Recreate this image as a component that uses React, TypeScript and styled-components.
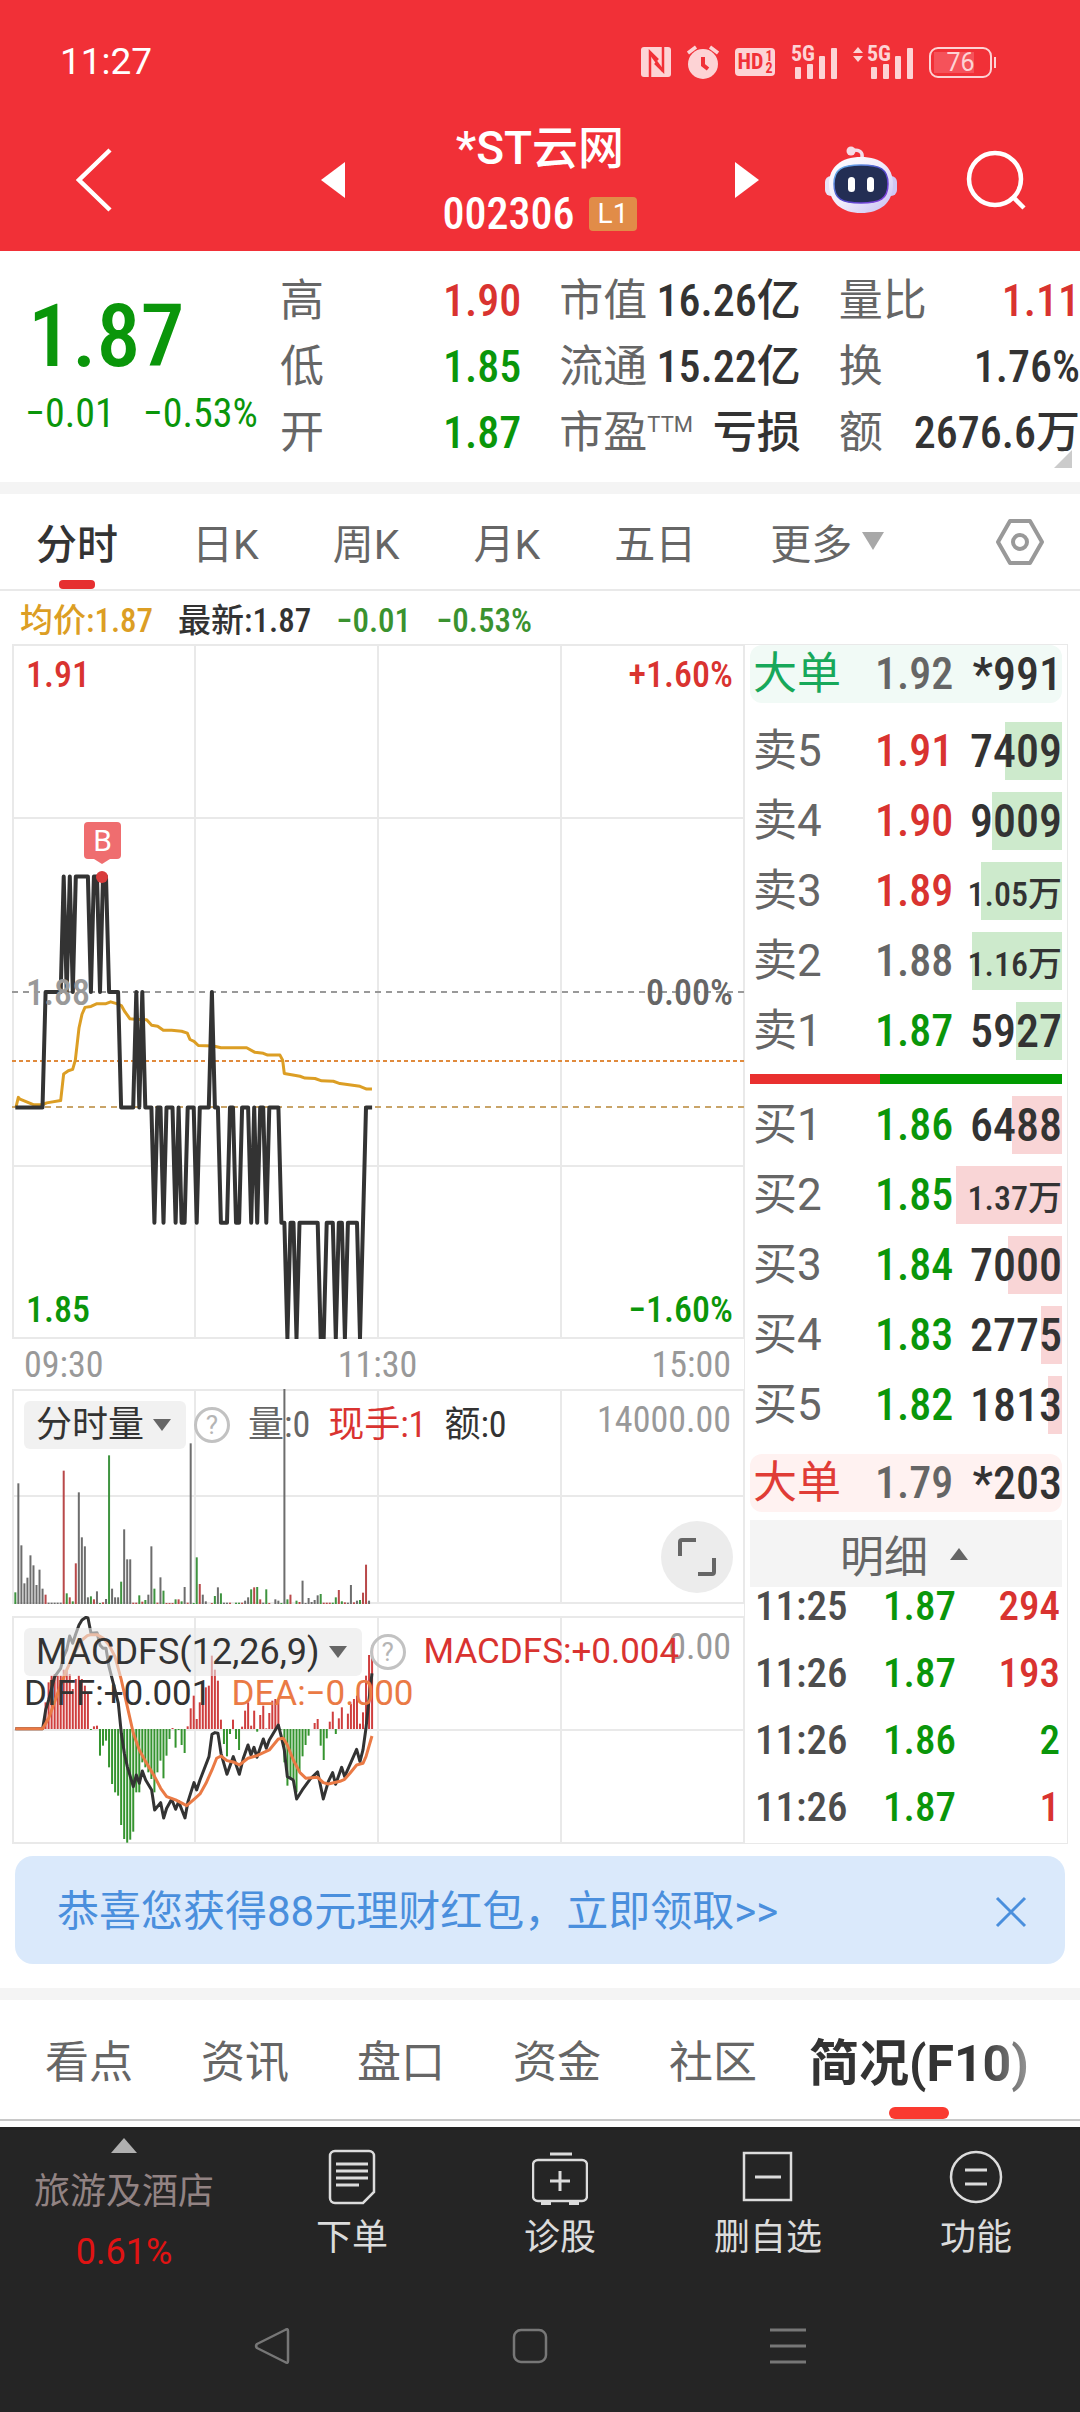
import React from "react";
import styled, { createGlobalStyle } from "styled-components";

const c = {
  brand: "#f13037",
  up: "#d93330",
  down: "#0a960a",
  ink: "#333333",
  mid: "#666666",
  pale: "#999999",
  line: "#e9e9e9",
  band: "#f4f4f4",
  dark: "#252525",
};

const text = `Roboto, "Noto Sans CJK SC", sans-serif`;
const figures = `"Roboto Condensed", Roboto, "Noto Sans CJK SC", sans-serif`;

const Global = createGlobalStyle`
  *, *::before, *::after { box-sizing: border-box; }
  body { margin: 0; background: #fff; font-family: ${text}; color: ${c.ink}; }
  button { margin: 0; padding: 0; border: 0; background: none; font: inherit; color: inherit; cursor: pointer; }
  h1, p, dl, dd, dt, ul { margin: 0; padding: 0; }
  svg { display: block; flex: none; }
`;

const Page = styled.div`
  display: flex;
  flex-direction: column;
  width: 100%;
  background: #fff;
  overflow: hidden;
`;

/* ---------- header ---------- */

const Header = styled.header`
  background: ${c.brand};
  color: #fff;
  padding-bottom: 15px;
`;

const StatusBar = styled.div`
  display: flex;
  align-items: center;
  justify-content: space-between;
  height: 124px;
  padding: 0 84px 0 60px;
  font-size: 37px;
  line-height: 40px;
`;

const StatusIcons = styled.div`
  display: flex;
  align-items: center;
  gap: 16px;
  font-family: ${figures};
`;

const TitleBar = styled.div`
  display: grid;
  grid-template-columns: 1fr 438px 1fr;
  grid-template-rows: 112px;
  align-items: center;
  padding: 0 54px 0 76px;
`;

const IconButton = styled.button`
  display: flex;
  align-items: center;
  justify-content: center;
  justify-self: start;
`;

const Switcher = styled.div`
  display: flex;
  align-items: center;
  justify-content: space-between;
  margin-left: -11px;
  margin-right: 11px;
`;

const StockTitle = styled.div`
  display: flex;
  flex-direction: column;
  align-items: center;
  gap: 4px;
`;

const StockName = styled.h1`
  font-size: 46px;
  line-height: 64px;
  font-weight: 500;
`;

const StockCode = styled.div`
  display: flex;
  align-items: center;
  gap: 14px;
  font-family: ${figures};
  font-size: 44px;
  line-height: 60px;
  font-weight: 500;
`;

const Level = styled.span`
  padding: 0 9px;
  border-radius: 4px;
  background: #e18c48;
  font-size: 28px;
  line-height: 34px;
  font-weight: 400;
  font-family: ${text};
`;

const HeaderTools = styled.div`
  display: flex;
  justify-content: flex-end;
  align-items: center;
  gap: 69px;
`;

/* ---------- quote ---------- */

const Quote = styled.section`
  position: relative;
  display: flex;
  padding: 17px 0 16px;
  font-family: ${figures};
`;

const Latest = styled.div`
  flex: 0 0 280px;
  display: flex;
  flex-direction: column;
  color: ${c.down};
`;

const BigPrice = styled.p`
  padding: 16px 0 2px 28px;
  font-size: 88px;
  line-height: 104px;
  font-weight: 500;
`;

const Deltas = styled.p`
  display: flex;
  gap: 28px;
  padding-left: 25px;
  font-size: 40px;
  line-height: 48px;
`;

const Stats = styled.dl`
  flex: 1;
  display: grid;
  grid-template-columns: repeat(3, 1fr);
  column-gap: 38px;
`;

const Stat = styled.div`
  display: flex;
  justify-content: space-between;
  font-size: 44px;
  line-height: 66px;
  white-space: nowrap;
`;

const StatLabel = styled.dt`
  color: ${c.mid};
`;

const Ttm = styled.sup`
  font-size: 22px;
  line-height: 22px;
  font-family: ${text};
`;

const StatValue = styled.dd<{ $color?: string }>`
  color: ${(p) => p.$color ?? c.ink};
  font-weight: 500;
`;

const Corner = styled.i`
  position: absolute;
  right: 8px;
  bottom: 14px;
  border-left: 18px solid transparent;
  border-bottom: 18px solid #cbcbcb;
`;

const Band = styled.div`
  height: 12px;
  background: ${c.band};
`;

/* ---------- period tabs ---------- */

const PeriodTabs = styled.nav`
  display: flex;
  gap: 74px;
  height: 97px;
  padding: 0 35px 0 36px;
  border-bottom: 2px solid ${c.line};
  font-size: 41px;
`;

const PeriodTab = styled.button<{ $active?: boolean }>`
  position: relative;
  display: flex;
  align-items: center;
  gap: 10px;
  padding-bottom: 2px;
  color: ${(p) => (p.$active ? c.ink : c.mid)};
  font-weight: ${(p) => (p.$active ? 500 : 400)};
  &::after {
    content: "";
    display: ${(p) => (p.$active ? "block" : "none")};
    position: absolute;
    left: 50%;
    bottom: 0;
    width: 36px;
    height: 9px;
    margin-left: -18px;
    border-radius: 4px;
    background: #e62f30;
  }
`;

const Settings = styled(IconButton)`
  margin-left: auto;
`;

const Summary = styled.div`
  display: flex;
  align-items: center;
  gap: 25px;
  height: 53px;
  padding: 6px 0 0 20px;
  font-family: ${figures};
  font-size: 33px;
  line-height: 44px;
  font-weight: 500;
`;

const Tint = styled.span<{ $color: string }>`
  color: ${(p) => p.$color};
`;

/* ---------- charts ---------- */

const Board = styled.div`
  display: flex;
  padding: 0 12px;
`;

const Charts = styled.div`
  flex: 1;
  min-width: 0;
  display: flex;
  flex-direction: column;
  font-family: ${figures};
  font-size: 36px;
  line-height: 48px;
`;

const Plot = styled.div<{ $h: number; $gap?: number }>`
  position: relative;
  height: ${(p) => p.$h}px;
  margin-top: ${(p) => p.$gap ?? 0}px;
  > svg {
    width: 100%;
    height: 100%;
  }
`;

const Scale = styled.div`
  position: absolute;
  inset: 7px 11px 5px 14px;
  display: flex;
  flex-direction: column;
  justify-content: space-between;
  font-weight: 500;
`;

const ScaleRow = styled.div<{ $left: string; $right?: string }>`
  display: flex;
  justify-content: space-between;
  color: ${(p) => p.$left};
  span + span {
    color: ${(p) => p.$right ?? p.$left};
  }
`;

const BuyMark = styled.span`
  position: absolute;
  left: 72px;
  top: 178px;
  width: 37px;
  border-radius: 4px;
  background: #ef6d6f;
  color: #fff;
  font-family: ${text};
  font-size: 30px;
  line-height: 37px;
  text-align: center;
  &::after {
    content: "";
    position: absolute;
    left: 10px;
    top: 37px;
    border: 8px solid transparent;
    border-bottom: 0;
    border-top: 5px solid #ef6d6f;
  }
`;

const TimeAxis = styled.div`
  display: flex;
  justify-content: space-between;
  padding: 2px 13px 0 12px;
  color: ${c.pale};
`;

const Readout = styled.div`
  position: absolute;
  left: 12px;
  top: 12px;
  display: flex;
  align-items: center;
  gap: 18px;
  white-space: nowrap;
`;

const MacdReadout = styled(Readout)`
  font-family: ${text};
  font-size: 35px;
`;

const Pill = styled.button`
  display: flex;
  align-items: center;
  gap: 9px;
  height: 48px;
  padding: 0 15px 0 12px;
  border-radius: 6px;
  background: rgba(232, 232, 232, 0.6);
  color: ${c.ink};
  font-size: 36px;
`;

const Help = styled.button`
  width: 36px;
  height: 36px;
  margin-left: -10px;
  border: 3px solid #c2c2c2;
  border-radius: 50%;
  color: #b5b5b5;
  font-family: ${text};
  font-size: 26px;
  line-height: 30px;
`;

const SecondLine = styled.div`
  position: absolute;
  left: 12px;
  top: 54px;
  display: flex;
  gap: 20px;
  font-family: ${text};
  font-size: 35px;
`;

const TopRight = styled.span`
  position: absolute;
  right: 13px;
  top: 7px;
  color: ${c.pale};
`;

const Expand = styled.button`
  position: absolute;
  right: 11px;
  bottom: 11px;
  display: flex;
  align-items: center;
  justify-content: center;
  width: 72px;
  height: 72px;
  border-radius: 50%;
  background: #ececec;
`;

/* ---------- order book ---------- */

const Book = styled.aside`
  flex: 0 0 324px;
  padding: 0 5px;
  border: 1px solid ${c.line};
  font-family: ${figures};
  font-size: 44px;
`;

const Table = styled.table<{ $gap?: number }>`
  width: 100%;
  margin-top: ${(p) => p.$gap ?? 0}px;
  border-collapse: collapse;
  table-layout: fixed;
`;

const LabelCell = styled.th<{ $color?: string; $h?: number }>`
  width: 125px;
  padding: 0 0 0 3px;
  color: ${(p) => p.$color ?? c.mid};
  font-family: ${text};
  font-weight: 400;
  line-height: ${(p) => p.$h ?? 70}px;
  text-align: left;
`;

const PriceCell = styled.td<{ $color: string }>`
  width: 81px;
  padding: 0;
  color: ${(p) => p.$color};
  font-weight: 500;
`;

const VolumeCell = styled.td`
  position: relative;
  padding: 0;
  text-align: right;
  font-weight: 500;
  white-space: nowrap;
`;

const VolumeBar = styled.i<{ $color: string }>`
  position: absolute;
  right: 0;
  top: 6px;
  height: 58px;
  background: ${(p) => p.$color};
`;

const VolumeText = styled.span<{ $small: boolean }>`
  position: relative;
  font-size: ${(p) => (p.$small ? 34 : 46)}px;
`;

const BigOrder = styled.div<{ $bg: string; $gap?: number }>`
  margin-top: ${(p) => p.$gap ?? 0}px;
  border-radius: 12px;
  background: ${(p) => p.$bg};
`;

const Ratio = styled.div`
  display: flex;
  height: 10px;
  margin: 8px 0 6px;
  background: #009a00;
`;

const RatioBuy = styled.i`
  background: #e9302f;
`;

const DetailButton = styled.button`
  display: flex;
  align-items: center;
  justify-content: center;
  gap: 22px;
  width: 100%;
  height: 67px;
  margin-top: 8px;
  padding-right: 4px;
  background: ${c.band};
  color: ${c.mid};
  font-family: ${text};
`;

const Ticks = styled.table`
  width: 100%;
  border-collapse: separate;
  border-spacing: 0;
  font-size: 41px;
  line-height: 36px;
  font-weight: 500;
  td {
    padding: 1px 2px 30px 0;
  }
  tr:last-child td {
    padding-bottom: 0;
  }
`;

const Tick = styled.td<{ $color: string; $end?: boolean; $w?: number }>`
  width: ${(p) => (p.$w ? `${p.$w}px` : "auto")};
  color: ${(p) => p.$color};
  text-align: ${(p) => (p.$end ? "right" : "left")};
  &:first-child {
    padding-left: 5px;
  }
`;

/* ---------- banner and sections ---------- */

const Banner = styled.div`
  display: flex;
  align-items: center;
  justify-content: space-between;
  height: 108px;
  margin: 12px 15px 24px;
  padding: 3px 38px 0 42px;
  border-radius: 18px;
  background: #dae9fb;
  color: #4a8fdd;
  font-size: 42px;
`;

const BannerLink = styled.a`
  color: inherit;
  text-decoration: none;
  line-height: 60px;
`;

const Sections = styled.nav`
  position: relative;
  display: flex;
  height: 121px;
  margin-bottom: 6px;
  padding-left: 11px;
  border-bottom: 2px solid #c8c8c8;
  overflow: hidden;
  &::after {
    content: "";
    position: absolute;
    inset: 0 0 16px auto;
    width: 100px;
    background: linear-gradient(to right, rgba(255, 255, 255, 0), #fff);
    pointer-events: none;
  }
`;

const Section = styled.button<{ $active?: boolean }>`
  position: relative;
  padding: 0 ${(p) => (p.$active ? 18 : 34)}px 2px;
  color: ${(p) => (p.$active ? c.ink : c.mid)};
  font-size: ${(p) => (p.$active ? 50 : 44)}px;
  font-weight: ${(p) => (p.$active ? 700 : 400)};
  white-space: nowrap;
  &::after {
    content: "";
    display: ${(p) => (p.$active ? "block" : "none")};
    position: absolute;
    left: 50%;
    bottom: 0;
    width: 60px;
    height: 12px;
    margin-left: -30px;
    border-radius: 6px;
    background: #fa3a30;
  }
`;

/* ---------- bottom ---------- */

const Footer = styled.footer`
  background: ${c.dark};
  color: #dcdcdc;
  font-size: 36px;
`;

const Actions = styled.div`
  display: flex;
`;

const Sector = styled.button`
  flex: 0 0 248px;
  display: flex;
  flex-direction: column;
  align-items: center;
  padding-top: 11px;
  color: #928383;
`;

const SectorName = styled.span`
  padding-top: 12px;
  line-height: 54px;
`;

const SectorChange = styled.span`
  line-height: 66px;
  color: #e01313;
`;

const Action = styled.button`
  flex: 1;
  display: flex;
  flex-direction: column;
  align-items: center;
  gap: 8px;
  padding-top: 22px;
  line-height: 50px;
`;

const SystemNav = styled.div`
  display: flex;
  align-items: center;
  justify-content: center;
  gap: 222px;
  height: 127px;
  padding: 0 20px 5px 0;
`;

/* ---------- data ---------- */

const minuteX = (i: number) => (46 + i * 9.07) / 3 - 12;

const priceRuns: [number, number][] = [
  [1.87, 10], [1.88, 6], [1.89, 1], [1.88, 1], [1.89, 1], [1.88, 1], [1.89, 5], [1.88, 1], [1.89, 2], [1.88, 1],
  [1.89, 2], [1.88, 4], [1.87, 5], [1.88, 1], [1.87, 1], [1.88, 1], [1.87, 3], [1.86, 1], [1.87, 2], [1.86, 1],
  [1.87, 3], [1.86, 1], [1.87, 1], [1.86, 2], [1.87, 3], [1.86, 1], [1.87, 4], [1.88, 1], [1.87, 2], [1.86, 3],
  [1.87, 2], [1.86, 2], [1.87, 3], [1.86, 1], [1.87, 1], [1.86, 1], [1.87, 2], [1.86, 1], [1.87, 4], [1.86, 2],
  [1.85, 1], [1.86, 2], [1.85, 1], [1.86, 7], [1.85, 2], [1.86, 3], [1.85, 1], [1.86, 2], [1.85, 1], [1.86, 4],
  [1.85, 1], [1.86, 1], [1.87, 3],
];

const pricePoints = priceRuns
  .flatMap(([p, n]) => Array<number>(n).fill(p))
  .map((p, i) => `${minuteX(i).toFixed(1)},${(348 - (p - 1.88) * 11540).toFixed(1)}`)
  .join(" ");

const averagePoints =
  "48,1017 55,996 60,1000 100,1012 128,1012 140,1008 182,1003 191,945 205,938 218,935 226,915 237,845 246,815 255,800 273,798 291,792 318,792 332,788 350,792 364,796 375,810 390,825 405,826 440,827 455,839 473,841 490,850 515,850 545,852 562,856 570,870 582,874 595,883 640,884 663,888 740,888 765,898 790,900 803,904 840,904 848,915 853,944 900,950 915,954 945,955 965,960 1000,961 1020,966 1080,972 1100,978 1116,978";

const volumes =
  "g35 k362 k176 k62 k79 k146 k116 k57 k103 k46 r28 k4 k4 k4 k4 k4 r400 g32 r20 g8 r122 k335 k200 k173 k20 g23 r14 k38 g3 r5 k15 g446 k46 k20 k20 g67 k224 k134 k134 r4 r4 g26 r7 g12 k28 k173 g46 r4 k80 g40 r3 r3 r3 g14 r14 g8 k51 r4 k482 g3 g140 r60 k28 k8 k0 r3 g24 k50 g32 k4 k4 r4 k0 g4 g4 r4 k10 k20 g44 r50 g51 r14 k4 g44 r3 k0 k14 k10 g3 k645 g14 r28 k0 g10 r6 k70 k3 k18 k6 k12 k26 g30 r4 r4 r4 g4 g20 r42 g8 r5 k4 k57 r5 k10 g12 r34 r118 k10"
    .split(" ")
    .map((v) => ({ tone: v[0], size: Number(v.slice(1)) / 3 }));

const tones: Record<string, string> = { g: "#3f9440", k: "#6d6d6d", r: "#b9494a" };

const macd = [
  0, 0, 0, 0, 0, 0, 0, 0, 0, 0, 80, 140, 160, 165, 160, 160, 178, 175, 165, 120, 150, 160, 150, 130, 105, -3, 8, 10,
  -80, -50, -35, -115, -165, -190, -200, -288, -330, -341, -332, -308, -190, -190, -100, -115, -130, -150, -190,
  -130, -95, -148, -80, -30, 3, -56, -3, -48, -72, 8, 62, 100, 30, 80, 120, 125, 130, 220, 178, 145, 28, -45, -82,
  -15, 28, -30, -63, 7, 55, 80, 10, 55, -8, 42, 70, 2, 48, 85, 90, 85, -2, -100, -170, -150, -150, -190, -130, -82,
  -48, -20, 0, 18, 30, -50, -93, -28, 22, 52, -15, 32, 65, 0, 46, 75, 90, 100, 16, 50, 160, 222, 250,
];

const diffPoints =
  "46,1166 128,1166 137,1110 146,1080 164,1010 182,985 191,950 200,930 209,888 218,910 228,880 237,855 246,840 258,832 264,834 273,880 291,878 300,915 309,925 318,925 327,980 345,1050 355,1090 364,1180 373,1240 382,1280 400,1340 409,1305 418,1330 427,1293 437,1320 455,1350 464,1410 482,1388 491,1434 500,1405 515,1378 527,1408 536,1385 555,1434 564,1385 582,1328 590,1350 600,1320 627,1250 636,1183 645,1178 654,1180 663,1240 681,1303 700,1250 718,1303 730,1255 744,1215 753,1245 762,1222 771,1252 790,1197 799,1225 808,1200 835,1155 844,1190 853,1230 862,1310 880,1320 890,1377 907,1350 930,1318 953,1296 970,1377 985,1325 998,1298 1007,1333 1025,1282 1034,1310 1070,1228 1080,1265 1089,1230 1098,1165 1107,1080 1116,1000";

const deaPoints =
  "46,1166 128,1166 146,1135 164,1085 182,1035 200,990 228,930 246,900 262,887 273,884 291,884 310,895 327,915 345,950 364,1020 382,1100 400,1180 418,1230 437,1265 464,1310 482,1345 500,1370 527,1380 560,1397 582,1378 600,1362 618,1330 636,1290 650,1255 663,1248 681,1262 700,1266 718,1275 744,1255 771,1247 808,1230 835,1197 850,1195 862,1215 880,1260 900,1298 918,1315 953,1312 970,1328 985,1332 1020,1324 1034,1318 1050,1300 1070,1275 1089,1270 1098,1250 1116,1188";

type Level2 = { label: string; price: string; shown: string; size: number; color: string };

const sells: Level2[] = [
  { label: "卖5", price: "1.91", shown: "7409", size: 7409, color: c.up },
  { label: "卖4", price: "1.90", shown: "9009", size: 9009, color: c.up },
  { label: "卖3", price: "1.89", shown: "1.05万", size: 10500, color: c.up },
  { label: "卖2", price: "1.88", shown: "1.16万", size: 11600, color: c.mid },
  { label: "卖1", price: "1.87", shown: "5927", size: 5927, color: c.down },
];

const buys: Level2[] = [
  { label: "买1", price: "1.86", shown: "6488", size: 6488, color: c.down },
  { label: "买2", price: "1.85", shown: "1.37万", size: 13700, color: c.down },
  { label: "买3", price: "1.84", shown: "7000", size: 7000, color: c.down },
  { label: "买4", price: "1.83", shown: "2775", size: 2775, color: c.down },
  { label: "买5", price: "1.82", shown: "1813", size: 1813, color: c.down },
];

const trades = [
  { time: "11:25", price: "1.87", size: "294", color: c.up },
  { time: "11:26", price: "1.87", size: "193", color: c.up },
  { time: "11:26", price: "1.86", size: "2", color: c.down },
  { time: "11:26", price: "1.87", size: "1", color: c.up },
];

const stats = [
  { label: "高", value: "1.90", color: c.up },
  { label: "市值", value: "16.26亿" },
  { label: "量比", value: "1.11", color: c.up },
  { label: "低", value: "1.85", color: c.down },
  { label: "流通", value: "15.22亿" },
  { label: "换", value: "1.76%" },
  { label: "开", value: "1.87", color: c.down },
  { label: "市盈", note: "TTM", value: "亏损" },
  { label: "额", value: "2676.6万" },
];

/* ---------- drawings ---------- */

const pink = "#fdd3d5";

const Nfc = () => (
  <svg width="30" height="30" viewBox="0 0 30 30">
    <rect width="30" height="30" rx="3" fill={pink} />
    <path d="M9 30V5l8 8M22 0v24l-8-8" fill="none" stroke={c.brand} strokeWidth="2.500" />
    <path d="M9 6l13 18" fill="none" stroke={c.brand} strokeWidth="2.500" />
  </svg>
);

const Alarm = () => (
  <svg width="32" height="34" viewBox="0 0 32 34">
    <circle cx="16" cy="19" r="15" fill={pink} />
    <path d="M1 8l8-6M31 8l-8-6" stroke={pink} strokeWidth="3.500" />
    <path d="M16 12v8l5 4" fill="none" stroke={c.brand} strokeWidth="4" />
  </svg>
);

const HdBadge = styled.span`
  display: flex;
  align-items: center;
  justify-content: center;
  gap: 2px;
  width: 40px;
  height: 28px;
  border-radius: 4px;
  background: ${pink};
  color: ${c.brand};
  font-size: 22px;
  line-height: 28px;
  font-weight: 700;
`;

const HdSims = styled.span`
  display: flex;
  flex-direction: column;
  font-size: 14px;
  line-height: 12px;
`;

const SignalBox = styled.span`
  position: relative;
  display: block;
  color: ${pink};
`;

const SignalText = styled.span<{ $shift?: boolean }>`
  position: absolute;
  left: ${(p) => (p.$shift ? 14 : 0)}px;
  top: 0;
  font-size: 22px;
  line-height: 16px;
  font-weight: 700;
`;

const Signal = ({ roaming }: { roaming?: boolean }) => {
  const s = roaming ? 14 : 0;
  return (
    <SignalBox>
      <svg width={46 + s} height="33" viewBox={`0 0 ${46 + s} 33`} fill={pink}>
        {roaming && <path d="M0 7l5-6 5 6zM0 10h10l-5 6z" />}
        <rect x={4 + s} y="21" width="6" height="12" rx="1" />
        <rect x={16 + s} y="18" width="6" height="15" rx="1" />
        <rect x={28 + s} y="10" width="6" height="23" rx="1" />
        <rect x={40 + s} y="2" width="6" height="31" rx="1" />
      </svg>
      <SignalText $shift={roaming}>5G</SignalText>
    </SignalBox>
  );
};

const Battery = styled.span`
  position: relative;
  width: 63px;
  height: 31px;
  margin-right: 4px;
  border: 2px solid ${pink};
  border-radius: 9px;
  color: ${pink};
  background: linear-gradient(to right, #f5525a 75%, transparent 75%) 3px 3px / 53px 21px no-repeat;
  font-family: ${text};
  font-size: 25px;
  line-height: 28px;
  text-align: center;
  &::after {
    content: "";
    position: absolute;
    right: -6px;
    top: 8px;
    width: 2px;
    height: 11px;
    background: ${pink};
  }
`;

const Robot = () => (
  <svg width="72" height="68" viewBox="0 0 72 68">
    <defs>
      <linearGradient id="shell" x1="0" y1="0" x2="1" y2="1">
        <stop offset="0" stopColor="#ffffff" />
        <stop offset="0.500" stopColor="#f1ecfb" />
        <stop offset="1" stopColor="#c5bdf3" />
      </linearGradient>
      <linearGradient id="rim" x1="0" y1="0" x2="1" y2="1">
        <stop offset="0" stopColor="#6fc6f2" />
        <stop offset="0.500" stopColor="#4c49c8" />
        <stop offset="1" stopColor="#8a3fe0" />
      </linearGradient>
    </defs>
    <path d="M37 12c1-6-2-8-9-8" fill="none" stroke="#f3dcea" strokeWidth="3.500" />
    <circle cx="26" cy="5" r="4.500" fill="#f6dbe6" />
    <rect x="0" y="30" width="14" height="20" rx="6" fill="#e9e2f7" />
    <rect x="58" y="30" width="14" height="20" rx="6" fill="#cfc7f4" />
    <path d="M36 11c20 0 32 10 32 27 0 19-13 29-32 29S4 57 4 38c0-17 12-27 32-27z" fill="url(#shell)" />
    <path d="M36 19c19 0 27 4 27 19s-8 19-27 19S9 53 9 38s8-19 27-19z" fill="#232e54" stroke="url(#rim)" strokeWidth="1.500" />
    <rect x="23" y="31" width="7" height="15" rx="3.500" fill="#fff" />
    <rect x="42" y="31" width="7" height="15" rx="3.500" fill="#fff" />
  </svg>
);

const Caret = ({ w, h, color, up }: { w: number; h: number; color: string; up?: boolean }) => (
  <svg width={w} height={h} viewBox="0 0 10 10" preserveAspectRatio="none">
    <path d={up ? "M0 10L5 0l5 10z" : "M0 0h10L5 10z"} fill={color} />
  </svg>
);

const GridLines = ({ h, mids }: { h: number; mids: number[] }) => (
  <g stroke={c.line} strokeWidth="2" fill="none">
    <rect x="1" y="1" width="731" height={h - 2} />
    <path d={`M183 0V${h}M366 0V${h}M549 0V${h}`} />
    {mids.map((y) => (
      <path key={y} d={`M0 ${y}H732`} />
    ))}
  </g>
);

const line = { fill: "none", strokeLinejoin: "round", vectorEffect: "non-scaling-stroke" } as const;

const PricePlot = () => (
  <svg viewBox="0 0 732 695" preserveAspectRatio="none">
    <GridLines h={695} mids={[174, 522]} />
    <path d="M0 348H732" stroke="#999" strokeWidth="2" strokeDasharray="6 5" />
    <path d="M0 417H732" stroke="#e08a3c" strokeWidth="2" strokeDasharray="4 3" />
    <path d="M0 463H732" stroke="#c9a468" strokeWidth="2" strokeDasharray="6 5" />
    <g transform="translate(-12 -4) scale(0.3333 0.4592)">
      <polyline points={averagePoints} {...line} stroke="#dc9e24" strokeWidth="3" />
    </g>
    <polyline points={pricePoints} {...line} stroke="#333" strokeWidth="4" />
    <circle cx="90" cy="233" r="6" fill="#d93c3c" />
  </svg>
);

const VolumePlot = () => (
  <svg viewBox="0 0 732 215" preserveAspectRatio="none">
    <GridLines h={215} mids={[107]} />
    {volumes.map((v, i) => (
      <rect key={i} x={minuteX(i) - 1} y={215 - v.size} width="2" height={v.size} fill={tones[v.tone]} />
    ))}
  </svg>
);

const MacdPlot = () => (
  <svg viewBox="0 0 732 228" preserveAspectRatio="none">
    <GridLines h={228} mids={[114]} />
    {macd.map((v, i) => (
      <rect
        key={i}
        x={minuteX(i) - 1}
        y={v > 0 ? 113 - v / 3 : 113}
        width="2"
        height={Math.abs(v) / 3}
        fill={v > 0 ? "#cf3e3e" : "#35942f"}
      />
    ))}
    <g transform="translate(-12 -276) scale(0.3333)">
      <polyline points={diffPoints} {...line} stroke="#333" strokeWidth="3" />
      <polyline points={deaPoints} {...line} stroke="#ea7a45" strokeWidth="3" />
    </g>
  </svg>
);

const outline = { fill: "none", stroke: "#dcdcdc", strokeWidth: 2.5 } as const;

const actions = [
  {
    label: "下单",
    icon: (
      <g {...outline}>
        <path d="M11 2h34a5 5 0 0 1 5 5v36l-11 11H11a5 5 0 0 1-5-5V7a5 5 0 0 1 5-5z" />
        <path d="M12 15h32M12 22h32M12 29h32M12 36h23" strokeWidth="3" />
      </g>
    ),
  },
  {
    label: "诊股",
    icon: (
      <g {...outline}>
        <rect x="1" y="11" width="54" height="41" rx="5" />
        <path d="M18 5h22M28 22v20M18 32h20" strokeWidth="3" />
        <path d="M9 54h10M37 54h10" strokeWidth="4" />
      </g>
    ),
  },
  {
    label: "删自选",
    icon: (
      <g {...outline}>
        <rect x="4" y="4" width="47" height="47" />
        <path d="M15 28h26" strokeWidth="3" />
      </g>
    ),
  },
  {
    label: "功能",
    icon: (
      <g {...outline}>
        <circle cx="28" cy="28" r="25" />
        <path d="M17 21h22M17 35h22" strokeWidth="3" />
      </g>
    ),
  },
];

/* ---------- parts ---------- */

const Levels = ({ rows, bar, gap }: { rows: Level2[]; bar: string; gap?: number }) => (
  <Table $gap={gap}>
    <tbody>
      {rows.map((r) => (
        <tr key={r.label}>
          <LabelCell scope="row">{r.label}</LabelCell>
          <PriceCell $color={r.color}>{r.price}</PriceCell>
          <VolumeCell>
            <VolumeBar $color={bar} style={{ width: `${(r.size / 13700) * 100}%` }} />
            <VolumeText $small={r.shown.includes("万")}>{r.shown}</VolumeText>
          </VolumeCell>
        </tr>
      ))}
    </tbody>
  </Table>
);

const BigOrderRow = (p: { color: string; bg: string; price: string; size: string; gap?: number }) => (
  <BigOrder $bg={p.bg} $gap={p.gap}>
    <Table>
      <tbody>
        <tr>
          <LabelCell scope="row" $color={p.color} $h={58}>
            大单
          </LabelCell>
          <PriceCell $color={c.mid}>{p.price}</PriceCell>
          <VolumeCell>
            <VolumeText $small={false}>{p.size}</VolumeText>
          </VolumeCell>
        </tr>
      </tbody>
    </Table>
  </BigOrder>
);

export default function App() {
  return (
    <Page>
      <Global />
      <Header>
        <StatusBar>
          <span>11:27</span>
          <StatusIcons>
            <Nfc />
            <Alarm />
            <HdBadge>
              HD
              <HdSims>
                <span>1</span>
                <span>2</span>
              </HdSims>
            </HdBadge>
            <Signal />
            <Signal roaming />
            <Battery>76</Battery>
          </StatusIcons>
        </StatusBar>
        <TitleBar>
          <IconButton aria-label="返回">
            <svg width="36" height="64" viewBox="0 0 36 64">
              <path d="M34 2L3 32l31 30" fill="none" stroke="#fff" strokeWidth="4.500" />
            </svg>
          </IconButton>
          <Switcher>
            <IconButton aria-label="上一只">
              <svg width="24" height="36" viewBox="0 0 24 36">
                <path d="M24 0v36L0 18z" fill="#fff" />
              </svg>
            </IconButton>
            <StockTitle>
              <StockName>*ST云网</StockName>
              <StockCode>
                002306 <Level>L1</Level>
              </StockCode>
            </StockTitle>
            <IconButton aria-label="下一只">
              <svg width="24" height="36" viewBox="0 0 24 36">
                <path d="M0 0v36l24-18z" fill="#fff" />
              </svg>
            </IconButton>
          </Switcher>
          <HeaderTools>
            <IconButton aria-label="智能助手">
              <Robot />
            </IconButton>
            <IconButton aria-label="搜索">
              <svg width="60" height="60" viewBox="0 0 60 60" fill="none" stroke="#fff" strokeWidth="4.500">
                <circle cx="29" cy="29" r="26" />
                <path d="M47 47l11 11" />
              </svg>
            </IconButton>
          </HeaderTools>
        </TitleBar>
      </Header>

      <Quote>
        <Latest>
          <BigPrice>1.87</BigPrice>
          <Deltas>
            <span>−0.01</span>
            <span>−0.53%</span>
          </Deltas>
        </Latest>
        <Stats>
          {stats.map((s) => (
            <Stat key={s.label}>
              <StatLabel>
                {s.label}
                {s.note && <Ttm>{s.note}</Ttm>}
              </StatLabel>
              <StatValue $color={s.color}>{s.value}</StatValue>
            </Stat>
          ))}
        </Stats>
        <Corner />
      </Quote>
      <Band />

      <PeriodTabs>
        <PeriodTab $active>分时</PeriodTab>
        <PeriodTab>日K</PeriodTab>
        <PeriodTab>周K</PeriodTab>
        <PeriodTab>月K</PeriodTab>
        <PeriodTab>五日</PeriodTab>
        <PeriodTab>
          更多
          <Caret w={22} h={18} color="#a8a8a8" />
        </PeriodTab>
        <Settings aria-label="设置">
          <svg width="50" height="48" viewBox="0 0 50 48" fill="none" stroke="#999" strokeWidth="4" strokeLinejoin="round">
            <path d="M15 3h20l12 21-12 21H15L3 24z" />
            <circle cx="25" cy="24" r="7" />
          </svg>
        </Settings>
      </PeriodTabs>
      <Summary>
        <Tint $color="#dc9e24">均价:1.87</Tint>
        <Tint $color={c.ink}>最新:1.87</Tint>
        <Tint $color="#3a922f">−0.01</Tint>
        <Tint $color="#3a922f">−0.53%</Tint>
      </Summary>

      <Board>
        <Charts>
          <Plot $h={695}>
            <PricePlot />
            <Scale>
              <ScaleRow $left={c.up}>
                <span>1.91</span>
                <span>+1.60%</span>
              </ScaleRow>
              <ScaleRow $left={c.pale} $right={c.mid}>
                <span>1.88</span>
                <span>0.00%</span>
              </ScaleRow>
              <ScaleRow $left={c.down}>
                <span>1.85</span>
                <span>−1.60%</span>
              </ScaleRow>
            </Scale>
            <BuyMark>B</BuyMark>
          </Plot>
          <TimeAxis>
            <span>09:30</span>
            <span>11:30</span>
            <span>15:00</span>
          </TimeAxis>
          <Plot $h={215}>
            <VolumePlot />
            <Readout>
              <Pill>
                分时量
                <Caret w={18} h={12} color={c.mid} />
              </Pill>
              <Help aria-label="分时量说明">?</Help>
              <Tint $color={c.mid}>量:0</Tint>
              <Tint $color={c.up}>现手:1</Tint>
              <Tint $color={c.ink}>额:0</Tint>
            </Readout>
            <TopRight>14000.00</TopRight>
            <Expand aria-label="全屏">
              <svg width="38" height="38" viewBox="0 0 38 38" fill="none" stroke={c.mid} strokeWidth="4">
                <path d="M2 18V4q0-2 2-2h14M36 20v14q0 2-2 2H20" />
              </svg>
            </Expand>
          </Plot>
          <Plot $h={228} $gap={12}>
            <MacdPlot />
            <TopRight>0.00</TopRight>
            <MacdReadout>
              <Pill>
                MACDFS(12,26,9)
                <Caret w={18} h={12} color={c.mid} />
              </Pill>
              <Help aria-label="MACDFS说明">?</Help>
              <Tint $color={c.up}>MACDFS:+0.004</Tint>
            </MacdReadout>
            <SecondLine>
              <Tint $color={c.ink}>DIFF:+0.001</Tint>
              <Tint $color="#ea7a45">DEA:−0.000</Tint>
            </SecondLine>
          </Plot>
        </Charts>

        <Book>
          <BigOrderRow color="#17a85a" bg="#f1faf6" price="1.92" size="*991" />
          <Levels rows={sells} bar="#cdeacc" gap={13} />
          <Ratio>
            <RatioBuy style={{ width: "41.6%" }} />
          </Ratio>
          <Levels rows={buys} bar="#f9d5d6" />
          <BigOrderRow color="#e03c36" bg="#fff2f1" price="1.79" size="*203" gap={14} />
          <DetailButton>
            明细
            <Caret w={18} h={12} color={c.mid} up />
          </DetailButton>
          <Ticks>
            <tbody>
              {trades.map((t, i) => (
                <tr key={i}>
                  <Tick $color="#4d4d4d" $w={133}>
                    {t.time}
                  </Tick>
                  <Tick $color={c.down}>{t.price}</Tick>
                  <Tick $color={t.color} $end>
                    {t.size}
                  </Tick>
                </tr>
              ))}
            </tbody>
          </Ticks>
        </Book>
      </Board>

      <Banner>
        <BannerLink href="#bonus">恭喜您获得88元理财红包，立即领取&gt;&gt;</BannerLink>
        <IconButton aria-label="关闭">
          <svg width="32" height="32" viewBox="0 0 32 32" stroke="#4a8fdd" strokeWidth="3">
            <path d="M2 2l28 28M30 2L2 30" />
          </svg>
        </IconButton>
      </Banner>
      <Band />
      <Sections>
        {["看点", "资讯", "盘口", "资金", "社区"].map((s) => (
          <Section key={s}>{s}</Section>
        ))}
        <Section $active>简况(F10)</Section>
      </Sections>

      <Footer>
        <Actions>
          <Sector>
            <Caret w={26} h={15} color="#b0b0b0" up />
            <SectorName>旅游及酒店</SectorName>
            <SectorChange>0.61%</SectorChange>
          </Sector>
          {actions.map((a) => (
            <Action key={a.label}>
              <svg width="56" height="56" viewBox="0 0 56 56">
                {a.icon}
              </svg>
              {a.label}
            </Action>
          ))}
        </Actions>
        <SystemNav>
          <IconButton aria-label="后退">
            <svg width="36" height="38" viewBox="0 0 36 38" fill="none" stroke="#777" strokeWidth="2.500" strokeLinejoin="round">
              <path d="M34 4v30q0 3-3 1L3 21q-2-2 0-4L31 3q3-2 3 1z" />
            </svg>
          </IconButton>
          <IconButton aria-label="主屏幕">
            <svg width="36" height="36" viewBox="0 0 36 36" fill="none" stroke="#777" strokeWidth="2.500">
              <rect x="2" y="2" width="32" height="32" rx="7" />
            </svg>
          </IconButton>
          <IconButton aria-label="最近任务">
            <svg width="36" height="36" viewBox="0 0 36 36" stroke="#777" strokeWidth="3">
              <path d="M0 2h36M0 18h36M0 34h36" />
            </svg>
          </IconButton>
        </SystemNav>
      </Footer>
    </Page>
  );
}
